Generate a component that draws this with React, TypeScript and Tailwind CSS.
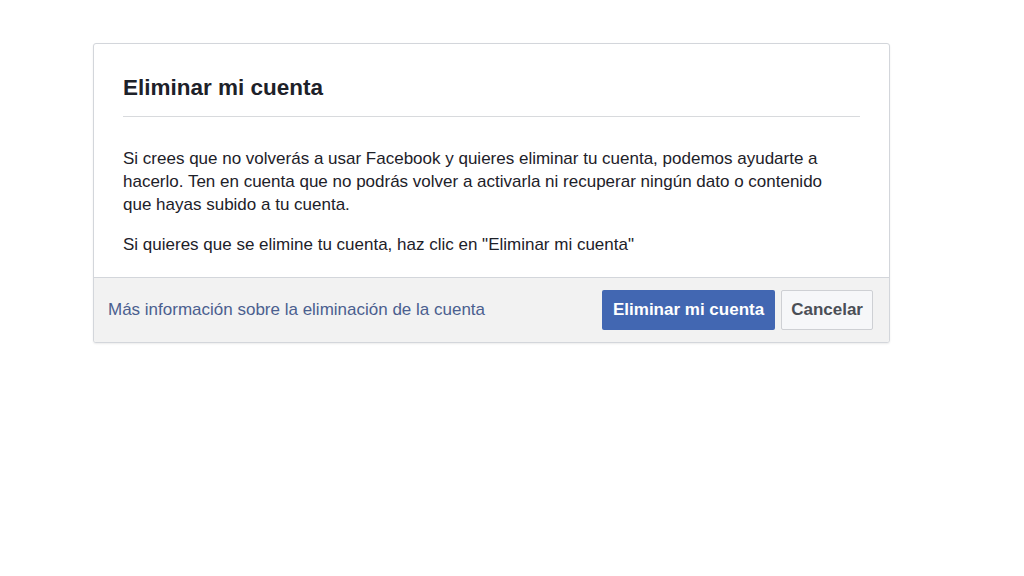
export default function App() {
  return (
    <div className="min-h-[576px] w-full bg-white pl-[93px] pt-[43px] font-['Liberation_Sans',Arial,sans-serif]">
      <div className="w-[797px] overflow-hidden rounded-[3px] border border-[#d3d6db] bg-white shadow-[0_1px_2px_rgba(0,0,0,0.08)]">
        <div className="px-[29px] pt-[30px]">
          <h1 className="border-b border-[#d8dadd] pb-[15px] pt-[1px] text-[22.5px] font-bold leading-[26px] text-[#1d2129]">
            Eliminar mi cuenta
          </h1>
          <div className="pb-[21px] pt-[30px] text-[17px] leading-[23px] text-[#1d2129]">
            <p>
              Si crees que no volverás a usar Facebook y quieres eliminar tu cuenta, podemos ayudarte a
              <br />
              hacerlo. Ten en cuenta que no podrás volver a activarla ni recuperar ningún dato o contenido
              <br />
              que hayas subido a tu cuenta.
            </p>
            <p className="mt-[17px]">Si quieres que se elimine tu cuenta, haz clic en "Eliminar mi cuenta"</p>
          </div>
        </div>
        <div className="flex h-[65px] items-center justify-between border-t border-[#d3d6db] bg-[#f2f2f2] pl-[14px] pr-[16px]">
          <a className="text-[17px] text-[#4b5f8f]">Más información sobre la eliminación de la cuenta</a>
          <div className="flex gap-[6px]">
            <button className="h-[40px] rounded-[2px] bg-[#4267b2] px-[11px] text-[17px] font-bold text-white">
              Eliminar mi cuenta
            </button>
            <button className="h-[40px] rounded-[2px] border border-[#ced0d4] bg-[#f6f7f9] px-[9px] text-[17px] font-bold text-[#4b4f56]">
              Cancelar
            </button>
          </div>
        </div>
      </div>
    </div>
  );
}
